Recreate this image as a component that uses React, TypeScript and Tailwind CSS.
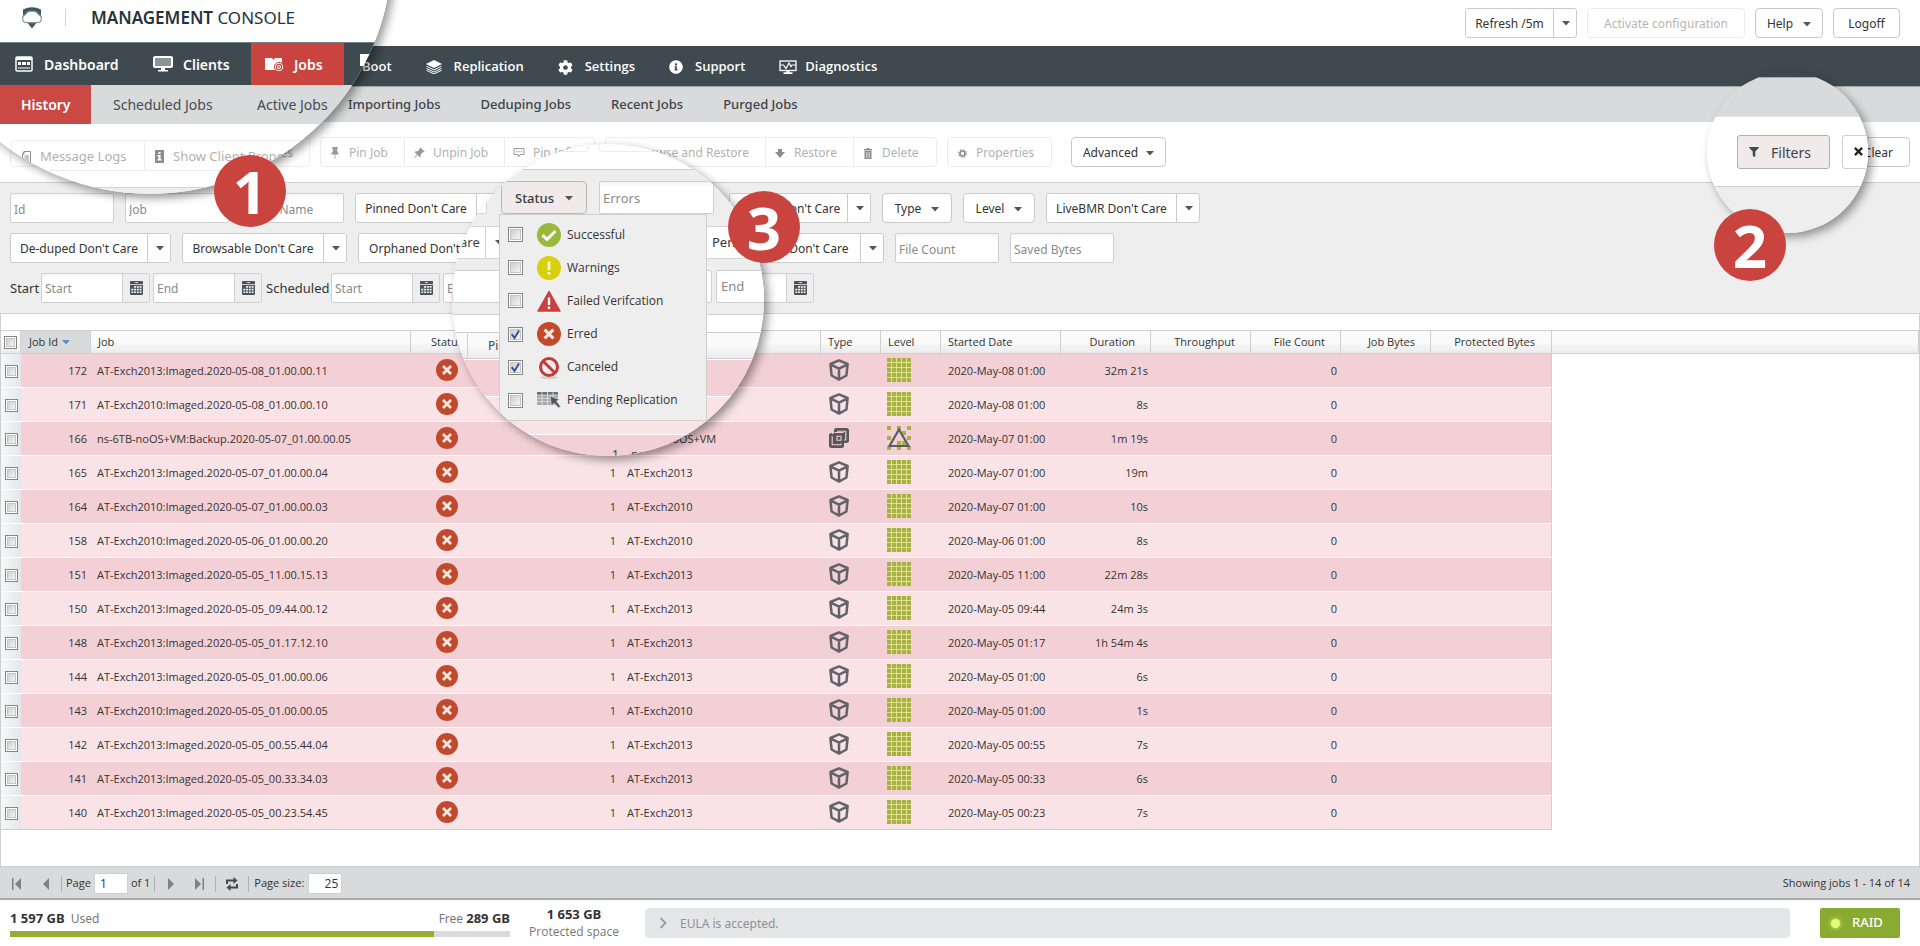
import React from "react";
import type { ReactNode } from "react";
import { FaCog, FaFilter, FaInfoCircle } from "react-icons/fa";
import { BsPinAngleFill, BsPinFill } from "react-icons/bs";

type IconProps = { className?: string };

const Caret = ({ className = "text-[#555]" }: IconProps) => (
  <svg className={`shrink-0 ${className}`} width="8" height="5" viewBox="0 0 8 5" aria-hidden="true">
    <path d="M0 0h8L4 4.6z" fill="currentColor" />
  </svg>
);

const Logo = () => (
  <svg width="22" height="22" viewBox="0 0 22 22" aria-hidden="true">
    <path d="M2 2.6Q11 -2 20 2.6V9H2z" fill="#3f5963" />
    <path d="M5.400 14.400 11 21.400l5.600-7z" fill="#3f5963" />
    <path
      d="M6 5.200Q11 3 16 5.200q.5 1.400 1.700 2.300 2.700 1.200 2.700 4.200 0 3.900-4.600 3.900H6.200q-4.600 0-4.600-3.900 0-3 2.700-4.200Q5.500 6.600 6 5.200z"
      fill="#fff"
      stroke="#7d8d94"
      strokeWidth="1.100"
    />
  </svg>
);

const DashboardIcon = () => (
  <svg width="18" height="16" viewBox="0 0 18 16" aria-hidden="true">
    <rect x="1" y="1" width="16" height="14" rx="1" fill="none" stroke="#fff" strokeWidth="1.500" />
    <path d="M1 1h16v3H1zM3 6h3v3H3zM7 6h4v3H7zM12 6h3v3h-3z" fill="#fff" />
    <path d="M3 12h12" stroke="#fff" strokeWidth="1" />
  </svg>
);

const ScreenIcon = () => (
  <svg width="20" height="16" viewBox="0 0 20 16" aria-hidden="true">
    <rect x="1" y="1" width="18" height="10" rx="1" fill="#8b9499" stroke="#fff" strokeWidth="2" />
    <path d="M8 11h4v3H8zM5 14h10v1.500H5z" fill="#fff" />
  </svg>
);

const JobsIcon = () => (
  <svg width="19" height="15" viewBox="0 0 19 15" aria-hidden="true">
    <path d="M0 1h7l1.500 2L10 1h7v12H0z" fill="#fff" />
    <circle cx="14" cy="10" r="4.600" fill="#fff" stroke="#c9433f" strokeWidth="1" />
    <circle cx="14" cy="10" r="2.600" fill="none" stroke="#c9433f" strokeWidth="1.200" />
    <circle cx="14" cy="10" r="0.900" fill="#c9433f" />
  </svg>
);

const LayersIcon = () => (
  <svg width="16" height="14" viewBox="0 0 16 14" aria-hidden="true">
    <path d="M8 0 16 4 8 8 0 4z" fill="#fff" />
    <path d="m.5 6.200 7.500 3.700 7.500-3.700M.5 8.400 8 12.100l7.500-3.700M.5 10.300 8 14l7.500-3.700" fill="none" stroke="#fff" strokeWidth="1" />
  </svg>
);

const DiagnosticsIcon = () => (
  <svg width="18" height="14" viewBox="0 0 18 14" aria-hidden="true">
    <rect x="1" y="1" width="16" height="9.500" fill="none" stroke="#fff" strokeWidth="1.300" />
    <path d="M1 5h3.500l2.500 3.500L10 3l2 3.500L13 5h4" fill="none" stroke="#fff" strokeWidth="1.200" />
    <path d="M7.500 10.500h3v2h-3zM4.500 12.300h9V14h-9z" fill="#fff" />
  </svg>
);

const LogsIcon = () => (
  <svg width="10" height="12" viewBox="0 0 10 12" aria-hidden="true">
    <path d="M3 .5h6.500v11H1.500V3zM3 .5V3H1.500M3.500 5h4.500M3.500 7h4.500M3.500 9h4.500" fill="none" stroke="#8d8d8d" />
  </svg>
);

const InfoBoxIcon = () => (
  <svg width="9" height="13" viewBox="0 0 9 13" aria-hidden="true">
    <rect width="9" height="13" fill="#8d8d8d" />
    <path d="M3.500 2h2v2h-2zM2.500 5h3v4h1v1.500h-4V9h1V6.500h-1z" fill="#fff" />
  </svg>
);

const BubbleIcon = () => (
  <svg width="12" height="10" viewBox="0 0 12 10" aria-hidden="true">
    <path d="M1 .5h10v6H7L5.500 9 5 6.500H1z" fill="none" stroke="#999" />
    <path d="M3 3h1.200v1.200H3zM5.400 3h1.200v1.200H5.400zM7.800 3H9v1.200H7.800z" fill="#999" />
  </svg>
);

const RestoreIcon = () => (
  <svg width="10" height="9" viewBox="0 0 10 9" aria-hidden="true">
    <path d="M3 0h4v3h3L5 9 0 3h3z" fill="#8d8d8d" />
  </svg>
);

const TrashIcon = () => (
  <svg width="8" height="11" viewBox="0 0 8 11" aria-hidden="true">
    <path d="M0 1h8v1.400H0zM2.700 0h2.600v1H2.700zM.5 3h7v8h-7z" fill="#8d8d8d" />
    <path d="M2.500 4v6M4 4v6M5.500 4v6" stroke="#fff" strokeWidth=".5" />
  </svg>
);

const GearRing = () => (
  <svg width="9" height="9" viewBox="0 0 9 9" aria-hidden="true">
    <circle cx="4.500" cy="4.500" r="2.500" fill="none" stroke="#8d8d8d" strokeWidth="1.600" />
    <circle cx="4.500" cy="4.500" r="3.800" fill="none" stroke="#8d8d8d" strokeWidth="1.200" strokeDasharray="1.500 1.480" />
  </svg>
);

const CalendarIcon = () => (
  <svg width="13" height="14" viewBox="0 0 13 14" aria-hidden="true">
    <rect width="13" height="14" rx="1" fill="#4b5459" />
    <path d="M0 3.500h13" stroke="#eee" strokeWidth=".8" />
    <path d="M5 1.500h3" stroke="#eee" strokeWidth=".8" />
    <path
      d="M4 5h2v1.700H4zM6.800 5h2v1.700h-2zM9.600 5h2v1.700h-2zM1.300 7.700h2v1.700h-2zM4 7.700h2v1.700H4zM6.800 7.700h2v1.700h-2zM9.600 7.700h2v1.700h-2zM1.300 10.400h2v1.700h-2zM4 10.400h2v1.700H4zM6.800 10.400h2v1.700h-2zM9.600 10.400h2v1.700h-2z"
      fill="#eee"
    />
  </svg>
);

const ErrorIcon = ({ size = 22 }: { size?: number }) => (
  <svg width={size} height={size} viewBox="0 0 22 22" role="img" aria-label="Erred">
    <circle cx="11" cy="11" r="11" fill="#c04a2b" />
    <path d="m7 7 8 8m0-8-8 8" stroke="#f9e6e2" strokeWidth="2.800" />
  </svg>
);

const CubeIcon = () => (
  <svg width="20" height="22" viewBox="0 0 20 22" role="img" aria-label="Imaged">
    <path
      d="M10 1.400 18.600 5l-1.200 11.500L10 20.600l-7.400-4.100L1.400 5zM1.400 5.400 10 9.600l8.600-4.200M10 9.600v11"
      fill="none"
      stroke="#62646a"
      strokeWidth="2.500"
      strokeLinejoin="round"
    />
  </svg>
);

const BackupIcon = () => (
  <svg width="20" height="20" viewBox="0 0 20 20" role="img" aria-label="Backup">
    <rect x="5" y="0" width="15" height="15" rx="2.500" fill="#55575c" />
    <rect x="0" y="5" width="15" height="15" rx="2.500" fill="#55575c" />
    <path d="M8 3.200h8.800v8.800h-1.600M3.200 8.200V16.800H12v-1.400M5.500 4.500H14.500M4.500 5.500H3" fill="none" stroke="#f3d0d5" strokeWidth="1.100" />
    <path d="M8 8.200h4v4H8z" fill="none" stroke="#f3d0d5" strokeWidth="1.100" />
  </svg>
);

const five = [0, 1, 2, 3, 4];

const FullIcon = () => (
  <svg width="24" height="24" viewBox="0 0 24 24" role="img" aria-label="Full">
    <rect width="24" height="24" fill="#dde58c" />
    {five.map((r) => five.map((c) => <rect key={`${r}${c}`} x={c * 5} y={r * 5} width="4" height="4" fill="#a9b045" />))}
  </svg>
);

const IncrementalIcon = () => (
  <svg width="24" height="24" viewBox="0 0 24 24" role="img" aria-label="Incremental">
    <path
      d="M0 0h4v4H0zM10 0h4v4h-4zM20 0h4v4h-4zM0 10h4v4H0zM20 10h4v4h-4zM15 5h4v4h-4zM10 15h4v4h-4zM15 15h4v4h-4zM0 20h4v4H0zM10 20h4v4h-4zM20 20h4v4h-4z"
      fill="#a9b045"
    />
    <path d="M12 3.500 21.500 20h-19z" fill="none" stroke="#5b5d61" strokeWidth="2.200" />
  </svg>
);

const CheckBox = ({ label, checked = false, big = false }: { label: string; checked?: boolean; big?: boolean }) => (
  <span className="relative inline-flex align-middle">
    <input
      type="checkbox"
      aria-label={label}
      defaultChecked={checked}
      className={`peer appearance-none border border-[#858585] bg-gradient-to-br from-[#c3c5c8] to-white shadow-[inset_0_0_0_1px_#fff,inset_0_0_0_2px_#c4c4c4] ${big ? "size-[15px]" : "size-[13px]"}`}
    />
    <svg className="pointer-events-none absolute inset-0 hidden size-full peer-checked:block" viewBox="0 0 15 15" aria-hidden="true">
      <path d="M3.800 7.200 6.500 11 11 3.500" fill="none" stroke="#37529b" strokeWidth="2" />
    </svg>
  </span>
);

const Button = ({ children, className = "" }: { children: ReactNode; className?: string }) => (
  <button type="button" className={`flex h-[30px] items-center justify-center rounded-[4px] border border-[#c9c9c9] bg-white pt-[2px] text-[#333] ${className}`}>
    {children}
  </button>
);

const Split = ({ label, width }: { label: string; width: string }) => (
  <div className={`flex h-[30px] shrink-0 overflow-hidden rounded-[3px] border border-[#cbcbcb] bg-white ${width}`}>
    <button type="button" className="min-w-0 flex-1 whitespace-nowrap pt-[2px] text-center text-[#333]">{label}</button>
    <button type="button" aria-label={`${label} options`} className="flex w-[23px] items-center justify-center border-l border-[#cbcbcb] pl-[2px]">
      <Caret />
    </button>
  </div>
);

const inputLook = "min-w-0 border border-[#cfcfcf] bg-white bg-gradient-to-b from-[#f4f5f5] to-white to-20% px-[3px] pt-[2px] text-[#444] placeholder:text-[#8a8a8a] outline-none";

const Field = ({ label, className = "w-[104px]" }: { label: string; className?: string }) => (
  <input aria-label={label} placeholder={label} className={`h-[30px] shrink-0 rounded-[2px] ${inputLook} ${className}`} />
);

const DateField = ({ label, name }: { label: string; name: string }) => (
  <div className="flex h-[30px] w-[109px] shrink-0">
    <input aria-label={name} placeholder={label} className={`w-[82px] rounded-l-[2px] ${inputLook}`} />
    <button type="button" aria-label={`Pick ${name}`} className="flex w-[27px] items-center justify-center rounded-r-[2px] border border-l-0 border-[#cfcfcf]">
      <CalendarIcon />
    </button>
  </div>
);

const NavLink = ({ icon, children, className = "" }: { icon?: ReactNode; children: ReactNode; className?: string }) => (
  <a href="#" className={`flex h-full items-center font-semibold text-white ${className}`}>
    {icon}
    {children}
  </a>
);

const Tool = ({ icon, children, className = "" }: { icon?: ReactNode; children: ReactNode; className?: string }) => (
  <button type="button" disabled className={`flex h-full items-center whitespace-nowrap pt-[2px] text-[#b1b1b1] ${className}`}>
    <span className="mr-2 flex w-[12px] justify-center">{icon}</span>
    {children}
  </button>
);

const toolGroup = "flex h-[30px] shrink-0 divide-x divide-[#ececec] overflow-hidden rounded-[4px] border border-[#ececec]";

const jobs: [number, string, string, string, string][] = [
  [172, "AT-Exch2013:Imaged.2020-05-08_01.00.00.11", "AT-Exch2013", "2020-May-08 01:00", "32m 21s"],
  [171, "AT-Exch2010:Imaged.2020-05-08_01.00.00.10", "AT-Exch2010", "2020-May-08 01:00", "8s"],
  [166, "ns-6TB-noOS+VM:Backup.2020-05-07_01.00.00.05", "ns-6TB-noOS+VM", "2020-May-07 01:00", "1m 19s"],
  [165, "AT-Exch2013:Imaged.2020-05-07_01.00.00.04", "AT-Exch2013", "2020-May-07 01:00", "19m"],
  [164, "AT-Exch2010:Imaged.2020-05-07_01.00.00.03", "AT-Exch2010", "2020-May-07 01:00", "10s"],
  [158, "AT-Exch2010:Imaged.2020-05-06_01.00.00.20", "AT-Exch2010", "2020-May-06 01:00", "8s"],
  [151, "AT-Exch2013:Imaged.2020-05-05_11.00.15.13", "AT-Exch2013", "2020-May-05 11:00", "22m 28s"],
  [150, "AT-Exch2013:Imaged.2020-05-05_09.44.00.12", "AT-Exch2013", "2020-May-05 09:44", "24m 3s"],
  [148, "AT-Exch2013:Imaged.2020-05-05_01.17.12.10", "AT-Exch2013", "2020-May-05 01:17", "1h 54m 4s"],
  [144, "AT-Exch2013:Imaged.2020-05-05_01.00.00.06", "AT-Exch2013", "2020-May-05 01:00", "6s"],
  [143, "AT-Exch2010:Imaged.2020-05-05_01.00.00.05", "AT-Exch2010", "2020-May-05 01:00", "1s"],
  [142, "AT-Exch2013:Imaged.2020-05-05_00.55.44.04", "AT-Exch2013", "2020-May-05 00:55", "7s"],
  [141, "AT-Exch2013:Imaged.2020-05-05_00.33.34.03", "AT-Exch2013", "2020-May-05 00:33", "6s"],
  [140, "AT-Exch2013:Imaged.2020-05-05_00.23.54.45", "AT-Exch2013", "2020-May-05 00:23", "7s"],
];

const thBase = "h-[24px] border-r border-y border-[#cfcfcf] p-0 px-[7px] font-normal text-[#333]";
const th = `${thBase} bg-gradient-to-b from-[#fafafa] from-50% to-[#e9ebed]`;

const JobTable = () => (
  <table className="w-full table-fixed border-separate border-spacing-0 text-left text-[11px] text-[#333]">
    <colgroup>
      <col className="w-[20px]" />
      <col className="w-[70px]" />
      <col className="w-[320px]" />
      <col className="w-[60px]" />
      <col className="w-[60px]" />
      <col className="w-[90px]" />
      <col className="w-[200px]" />
      <col className="w-[60px]" />
      <col className="w-[60px]" />
      <col className="w-[120px]" />
      <col className="w-[90px]" />
      <col className="w-[100px]" />
      <col className="w-[90px]" />
      <col className="w-[90px]" />
      <col className="w-[121px]" />
      <col />
    </colgroup>
    <thead>
      <tr>
        <th className={`${th} !px-0 text-center leading-none`}><CheckBox label="Select all jobs" /></th>
        <th className={`${thBase} bg-[#d9dadc]`}>
          <span className="flex items-center gap-1 pl-px">Job Id <Caret className="text-[#5f8cc4]" /></span>
        </th>
        <th className={th}>Job</th>
        <th className={`${th} text-right`}>Status</th>
        <th className={th} />
        <th className={th} />
        <th className={th} />
        <th className={th}>Type</th>
        <th className={th}>Level</th>
        <th className={th}>Started Date</th>
        <th className={`${th} !pr-[15px] text-right`}>Duration</th>
        <th className={`${th} !pr-[15px] text-right`}>Throughput</th>
        <th className={`${th} !pr-[15px] text-right`}>File Count</th>
        <th className={`${th} !pr-[15px] text-right`}>Job Bytes</th>
        <th className={`${th} !pr-4 text-right`}>Protected Bytes</th>
        <th className={th} />
      </tr>
    </thead>
    <tbody>
      {jobs.map(([id, job, client, started, duration], i) => (
        <tr key={id} className={`*:h-[34px] *:border-b *:p-0 *:pt-[2px] ${i % 2 ? "bg-[#f9e3e6]" : "bg-[#f3d0d5]"} ${i === jobs.length - 1 ? "*:border-[#cfcfcf]" : "*:border-white"}`}>
          <td className="bg-gradient-to-r from-[#f7f7f7] to-[#e4e6e9] text-center leading-none"><CheckBox label={`Select job ${id}`} /></td>
          <td className="!pr-1 text-right">{id}</td>
          <td className="!pl-[6px]">{job}</td>
          <td className="!pb-[2px] !pl-[25px] !pt-0"><ErrorIcon /></td>
          <td />
          <td className="!pr-[5px] text-right">1</td>
          <td className="!pl-[6px]">{client}</td>
          <td className="!pb-[2px] !pl-2 !pt-0">{id === 166 ? <BackupIcon /> : <CubeIcon />}</td>
          <td className="!pb-[2px] !pl-[6px] !pt-0">{id === 166 ? <IncrementalIcon /> : <FullIcon />}</td>
          <td className="!pl-[7px]">{started}</td>
          <td className="!pr-[3px] text-right">{duration}</td>
          <td />
          <td className="!pr-1 text-right">0</td>
          <td />
          <td className="border-r !border-r-[#cfcfcf]" />
          <td className="!border-white bg-white" />
        </tr>
      ))}
    </tbody>
  </table>
);

const lens = "absolute overflow-hidden rounded-full shadow-[4px_4px_10px_rgba(0,0,0,0.4)]";

const NavLens = () => (
  <div className={`${lens} -left-[92px] -top-[290px] size-[484px] bg-white pl-[92px] pt-[290px] text-[14px]`}>
    <div className="flex h-[42px] w-[392px] items-center bg-white pb-[7px] pl-[21px]">
      <Logo />
      <span className="ml-[22px] h-[17px] w-px bg-[#d5d5d5]" />
      <h1 className="ml-[25px] text-[17px] text-[#263238]"><span className="font-semibold">MANAGEMENT</span> CONSOLE</h1>
    </div>
    <nav className="flex h-[43px] w-[392px] items-center border-t border-[#6f8287] bg-[#3e4a4f]">
      <NavLink icon={<DashboardIcon />} className="w-[153px] gap-[11px] pl-[15px]">Dashboard</NavLink>
      <NavLink icon={<ScreenIcon />} className="w-[98px] gap-[10px]">Clients</NavLink>
      <NavLink icon={<JobsIcon />} className="w-[93px] gap-[10px] bg-[#c9433f] pl-[14px]">Jobs</NavLink>
      <span className="mb-2 ml-4 h-3 w-4 bg-white" />
    </nav>
    <nav className="flex h-[39px] w-[392px] items-center bg-[#d9dadc] text-[#454d51]">
      <a href="#" className="flex h-full w-[91px] items-center bg-[#ca4945] pl-[21px] font-semibold text-white">History</a>
      <a href="#" className="ml-[22px] w-[144px]">Scheduled Jobs</a>
      <a href="#">Active Jobs</a>
    </nav>
    <div className="flex h-[64px] w-[392px] border-b border-[#d3d3d3] pl-[11px] pt-4 text-[13px]">
      <div className="flex h-[31px] divide-x divide-[#ececec] rounded-[3px] border border-[#ececec]">
        <Tool icon={<LogsIcon />} className="w-[133px] pl-2">Message Logs</Tool>
        <Tool icon={<InfoBoxIcon />} className="w-[180px] pl-2">Show Client Properties</Tool>
      </div>
    </div>
    <div className="h-3 bg-[#eee]" />
  </div>
);

const FilterLens = () => (
  <div className={`${lens} right-[52px] top-[72px] size-[161px]`}>
    <div className="h-[5px] bg-[#3e4a4f]" />
    <div className="h-[40px] border-b border-t border-b-[#e3e3e3] border-t-[#aaa] bg-[#d9dadc]" />
    <div className="flex h-[70px] items-center gap-3 border-b border-[#cfcfcf] bg-white pl-[30px]">
      <button type="button" className="flex h-[34px] w-[93px] shrink-0 items-center gap-3 rounded-[3px] border border-[#b5b0b1] bg-[#f0eaeb] pl-[11px] pt-px text-[14px] text-[#444]">
        <FaFilter className="size-[10px] text-[#3e4a4f]" aria-hidden="true" />
        Filters
      </button>
      <button type="button" aria-label="Clear filters" className="flex h-[34px] w-[60px] shrink-0 items-center rounded-[3px] border border-[#d0d0d0] bg-white pl-[11px]">
        <svg width="9" height="9" viewBox="0 0 8 8" aria-hidden="true"><path d="m.8.8 6.400 6.400m0-6.400L.8 7.200" stroke="#222" strokeWidth="2" /></svg>
      </button>
    </div>
    <div className="h-[50px] bg-[#eee]" />
  </div>
);

const statuses: { label: string; checked?: boolean; icon: ReactNode }[] = [
  {
    label: "Successful",
    icon: <svg width="24" height="24" viewBox="0 0 24 24" aria-hidden="true"><circle cx="12" cy="12" r="12" fill="#9bb83c" /><path d="m5.500 12.200 4.500 4.300 8.500-8.500" fill="none" stroke="#fff" strokeWidth="3" /></svg>,
  },
  {
    label: "Warnings",
    icon: <svg width="24" height="24" viewBox="0 0 24 24" aria-hidden="true"><circle cx="12" cy="12" r="12" fill="#d9cf0b" /><path d="M12 5.500v8.500M12 16v2.600" stroke="#fdfbe0" strokeWidth="2.600" /></svg>,
  },
  {
    label: "Failed Verifcation",
    icon: <svg width="24" height="22" viewBox="0 0 24 22" aria-hidden="true"><path d="M12 1.500 23 21H1z" fill="#c9403d" stroke="#c9403d" strokeWidth="1.500" strokeLinejoin="round" /><path d="M12 7.500V15M12 16.500V19" stroke="#fff" strokeWidth="2.400" /></svg>,
  },
  { label: "Erred", checked: true, icon: <ErrorIcon size={24} /> },
  {
    label: "Canceled",
    checked: true,
    icon: <svg width="22" height="23" viewBox="0 0 22 23" aria-hidden="true"><ellipse cx="11" cy="21.500" rx="9" ry="1.300" fill="#ccc" /><circle cx="11" cy="11" r="8.500" fill="#eee" stroke="#c23b3b" strokeWidth="3" /><path d="m5.200 5.200 11.600 11.600" stroke="#c23b3b" strokeWidth="3" /></svg>,
  },
  {
    label: "Pending Replication",
    icon: <svg width="24" height="18" viewBox="0 0 24 18" aria-hidden="true"><rect y="1" width="21" height="13" fill="#a5a7a9" /><path d="M0 4h21M0 7.300h21M0 10.700h21M5 1v13M10.500 1v13M16 1v13" stroke="#eee" strokeWidth=".7" /><path d="M0 1h4.500v2.500H0zM5.500 1H10v2.500H5.500zM11 1h4.500v2.500H11zM16.500 1H21v2.500h-4.500z" fill="#6c7073" /><path d="m13 5 9.500 3.500-3.200 1.700 4.200 5-2 1.800-4.300-4.900L14.500 15z" fill="#4d575c" stroke="#eee" strokeWidth=".6" /></svg>,
  },
];

const StatusLens = () => (
  <div className={`${lens} left-[452px] top-[144px] size-[312px] bg-white text-[13px]`}>
    <div className="flex h-[26px] gap-[10px] border-b border-[#cfcfcf]">
      <span className="h-[8px] w-[141px] rounded-b-[4px] border border-t-0 border-[#ececec]" />
      <span className="h-[8px] w-[170px] rounded-b-[4px] border border-t-0 border-[#ececec]" />
    </div>
    <div className="h-[145px] overflow-hidden border-b border-[#cfcfcf] bg-[#eee] pt-[11px]">
      <div className="flex h-[33px]">
        <span className="mr-[14px] w-[35px] rounded-[3px] border border-[#d5d5d5] bg-white" />
        <button type="button" className="flex w-[86px] items-center justify-center gap-[11px] rounded-[4px] border border-[#bdb6b7] bg-[#f0eaeb] pt-[2px] font-medium text-[#3c3c3c]">
          Status <Caret />
        </button>
        <input aria-label="Errors" placeholder="Errors" className={`ml-3 w-[115px] rounded-[2px] ${inputLook}`} />
      </div>
      <div className="mt-3 flex h-[33px] justify-between">
        <div className="flex w-[70px] items-center border-y border-[#d5d5d5] bg-white pl-2 text-[#444]">
          <span className="flex h-full w-[26px] items-center border-r border-[#d0d0d0] pt-px">are</span>
          <Caret className="ml-[9px] text-[#555]" />
        </div>
        <span className="flex w-[58px] items-center border-y border-[#d5d5d5] bg-white pl-[6px] pt-px text-[#333]">Pending</span>
      </div>
      <div className="mt-[11px] flex h-[33px] gap-1">
        <span className="w-[260px] shrink-0 rounded-[2px] border border-[#cfcfcf] bg-white" />
        <span className="flex w-[60px] shrink-0 items-center rounded-[2px] border border-[#cfcfcf] bg-white pl-1 text-[#888]">End</span>
      </div>
    </div>
    <div className="h-[17px] bg-white" />
    <div className="flex h-[27px] items-center border-y border-[#cfcfcf] bg-gradient-to-b from-[#fafafa] from-50% to-[#e9ebed] pt-px text-[12px] text-[#444]">
      <span className="mr-5 h-full w-4 border-r border-[#cfcfcf]" />
      Pinned
    </div>
    <div className="mt-px h-[37px] border-b border-white bg-[#f3d0d5]" />
    <div className="h-[38px] border-b border-white bg-[#f9e3e6]" />
    <div className="flex h-[38px] items-center gap-3 bg-[#f3d0d5] pl-[160px] pt-[2px] text-[12px] text-[#444]">
      <span>1</span>
      <span>ns-6TB-noOS+VM</span>
    </div>
    <div className="absolute left-[47px] top-[70px] grid h-[207px] w-[208px] grid-rows-6 border border-[#cfcfcf] bg-[#eee] py-[3px] font-['Open_Sans',sans-serif] text-[12px] text-[#333]">
      {statuses.map((s) => (
        <label key={s.label} className="flex items-center pl-2">
          <CheckBox label={s.label} checked={s.checked} big />
          <span className="ml-[13px] mr-[5px] flex w-[26px] justify-center">{s.icon}</span>
          <span>{s.label}</span>
        </label>
      ))}
    </div>
  </div>
);

const Badge = ({ n, className }: { n: number; className: string }) => (
  <span className={`absolute flex size-[72px] items-center justify-center rounded-full bg-[#c9433f] text-[60px] font-bold leading-none text-white ${className}`}>{n}</span>
);

const PagerArrow = ({ label, d, className = "" }: { label: string; d: string; className?: string }) => (
  <button type="button" aria-label={label} className={`flex size-[13px] items-center justify-center text-[#7c8387] ${className}`}>
    <svg width="12" height="12" viewBox="0 0 12 12" aria-hidden="true"><path d={d} fill="currentColor" /></svg>
  </button>
);

const Rule = ({ className = "" }: IconProps) => <span className={`h-[16px] w-px bg-[#aeb1b3] ${className}`} />;

export default function App() {
  return (
    <div className="relative flex min-h-screen flex-col overflow-hidden bg-white font-['Noto_Sans','Open_Sans',sans-serif] text-[12px] text-[#333]">
      <header className="flex h-[46px] items-start justify-end gap-[10px] pr-5 pt-2">
        <Split label="Refresh /5m" width="w-[112px]" />
        <button type="button" disabled className="h-[30px] w-[158px] rounded-[4px] border border-[#ececec] pt-[2px] text-[#b5b5b5]">Activate configuration</button>
        <Button className="w-[68px] gap-[10px]">Help <Caret /></Button>
        <Button className="w-[67px]">Logoff</Button>
      </header>

      <nav className="flex h-[40px] items-center gap-[34px] bg-[#3e4a4f] pl-[362px] pt-[2px] font-['Open_Sans',sans-serif] text-[13px]">
        <NavLink>Boot</NavLink>
        <NavLink icon={<LayersIcon />} className="gap-3">Replication</NavLink>
        <NavLink icon={<FaCog className="size-[15px]" aria-hidden="true" />} className="gap-3">Settings</NavLink>
        <NavLink icon={<FaInfoCircle className="size-[14px]" aria-hidden="true" />} className="gap-3">Support</NavLink>
        <NavLink icon={<DiagnosticsIcon />} className="gap-2">Diagnostics</NavLink>
      </nav>

      <nav className="flex h-[36px] items-center gap-10 border-t border-[#a5a8aa] bg-[#d9dadc] pl-[348px] text-[13px] font-medium text-[#3c4448]">
        <a href="#">Importing Jobs</a>
        <a href="#">Deduping Jobs</a>
        <a href="#">Recent Jobs</a>
        <a href="#">Purged Jobs</a>
      </nav>

      <div className="flex h-[60px] items-center gap-[10px] pl-[10px] pr-[10px]">
        <div className={`${toolGroup} w-[300px]`}>
          <Tool icon={<LogsIcon />} className="w-[130px] pl-[10px]">{null}</Tool>
          <Tool className="flex-1 justify-end pr-4">Show Client Properties</Tool>
        </div>
        <div className={toolGroup}>
          <Tool icon={<BsPinFill className="size-[12px] text-[#999]" aria-hidden="true" />} className="w-[84px] pl-2">
            Pin Job
          </Tool>
          <Tool icon={<BsPinAngleFill className="size-[12px] text-[#999]" aria-hidden="true" />} className="w-[100px] pl-2">
            Unpin Job
          </Tool>
          <Tool icon={<BubbleIcon />} className="w-[89px] pl-2">Pin Info</Tool>
        </div>
        <div className={toolGroup}>
          <Tool className="w-[160px] justify-end pr-4">Browse and Restore</Tool>
          <Tool icon={<RestoreIcon />} className="w-[88px] pl-2">Restore</Tool>
          <Tool icon={<TrashIcon />} className="w-[82px] pl-2">Delete</Tool>
        </div>
        <div className={toolGroup}>
          <Tool icon={<GearRing />} className="w-[103px] pl-2">Properties</Tool>
        </div>
        <Button className="ml-[9px] w-[95px] gap-2">Advanced <Caret /></Button>
        <Button className="ml-auto w-[68px] justify-end pr-4">Clear</Button>
      </div>

      <section aria-label="Filters" className="flex h-[132px] flex-col gap-[10px] border-y border-[#cfcfcf] bg-[#eee] pl-[10px] pt-[10px]">
        <div className="flex gap-[11px]">
          <Field label="Id" />
          <Field label="Job" />
          <Field label="Client Name" />
          <Split label="Pinned Don't Care" width="w-[145px]" />
          <span className="w-[207px]" />
          <Split label="Purged Don't Care" width="w-[142px]" />
          <Button className="w-[70px] gap-[10px]">Type <Caret /></Button>
          <Button className="w-[72px] gap-[10px]">Level <Caret /></Button>
          <Split label="LiveBMR Don't Care" width="w-[154px]" />
        </div>
        <div className="flex gap-[11px]">
          <Split label="De-duped Don't Care" width="w-[161px]" />
          <Split label="Browsable Don't Care" width="w-[165px]" />
          <Split label="Orphaned Don't Care" width="w-[165px]" />
          <span className="w-[182px]" />
          <Split label="Pending Don't Care" width="w-[157px]" />
          <Field label="File Count" />
          <Field label="Saved Bytes" />
        </div>
        <div className="flex items-center gap-[3px]">
          <span className="w-[28px] pt-[2px] text-[13px]">Start</span>
          <DateField label="Start" name="Start from" />
          <DateField label="End" name="Start until" />
          <span className="w-[63px] pl-px pt-[2px] text-[13px]">Scheduled</span>
          <DateField label="Start" name="Scheduled from" />
          <DateField label="End" name="Scheduled until" />
          <span className="w-[147px]" />
          <DateField label="End" name="Completed until" />
        </div>
      </section>

      <main className="flex-1 border-x border-[#cfcfcf] pt-4 font-['Open_Sans',sans-serif]">
        <JobTable />
      </main>

      <div className="flex h-[34px] items-center border-b-2 border-t border-b-[#aaacad] border-t-[#cbcdce] bg-[#d9dadc] px-[10px] pt-[2px] font-['Open_Sans',sans-serif] text-[11px]">
        <PagerArrow label="First page" d="M1 0h1.500v12H1zM10 0v12L4 6z" />
        <PagerArrow label="Previous page" d="M9 0v12L3 6z" className="ml-4" />
        <Rule className="ml-[9px] mr-1" />
        <label className="flex items-center gap-[3px]">
          Page
          <input defaultValue="1" className="h-[21px] w-[34px] border border-[#d0d0d0] bg-white px-[5px] text-[12px]" />
        </label>
        <span className="ml-[3px] mr-1">of 1</span>
        <Rule />
        <PagerArrow label="Next page" d="M3 0v12l6-6z" className="ml-[9px]" />
        <PagerArrow label="Last page" d="M2 0v12l6-6zM9.500 0H11v12H9.500z" className="ml-[15px] mr-[10px]" />
        <Rule />
        <button type="button" aria-label="Reload" className="mx-[10px]">
          <svg width="12" height="14" viewBox="0 0 12 14" aria-hidden="true"><path d="M1 7V3.500h7M11 7v3.500H4" fill="none" stroke="#3e4a4f" strokeWidth="2" /><path d="m7.500 0 4 3.500-4 3.500zM4.500 7v7l-4-3.500z" fill="#3e4a4f" /></svg>
        </button>
        <Rule />
        <label className="ml-[5px] flex items-center gap-1">
          Page size:
          <input defaultValue="25" className="h-[21px] w-[34px] border border-[#d0d0d0] bg-white px-[3px] text-right text-[12px]" />
        </label>
        <span className="ml-auto">Showing jobs 1 - 14 of 14</span>
      </div>

      <footer className="flex h-[46px] items-center bg-white pl-[10px] pr-5">
        <div className="w-[500px] shrink-0">
          <div className="flex items-baseline justify-between text-[12px] text-[#777]">
            <span><b className="mr-[3px] text-[13px] text-[#333]">1 597 GB</b> Used</span>
            <span>Free <b className="text-[13px] text-[#333]">289 GB</b></span>
          </div>
          <div className="mt-[3px] flex h-[6px] bg-[#d9dcdf]"><div className="w-[84.7%] bg-[#96ad33]" /></div>
        </div>
        <div className="ml-[14px] w-[100px] shrink-0 text-center font-['Open_Sans',sans-serif] text-[12px] leading-[17px] text-[#777]">
          <b className="block text-[13px] text-[#333]">1 653 GB</b>
          <span className="whitespace-nowrap">Protected space</span>
        </div>
        <div className="ml-[21px] flex h-[30px] flex-1 items-center gap-[13px] rounded-[4px] bg-[#e5e6e8] pl-[14px] text-[#8d9093]">
          <svg width="8" height="12" viewBox="0 0 8 12" aria-hidden="true"><path d="m1.500 1 5 5-5 5" fill="none" stroke="#9a9d9f" strokeWidth="1.800" /></svg>
          <span className="pt-px">EULA is accepted.</span>
        </div>
        <button type="button" className="ml-[30px] flex h-[30px] w-[80px] items-center gap-3 rounded-[2px] bg-[#8aab32] pl-[11px] text-[13px] font-medium text-white">
          <span className="size-[9px] rounded-full bg-[#e3ff7c] shadow-[0_0_4px_#e3ff7c]" />
          RAID
        </button>
      </footer>

      <NavLens />
      <FilterLens />
      <StatusLens />
      <Badge n={1} className="left-[214px] top-[155px]" />
      <Badge n={2} className="right-[134px] top-[209px]" />
      <Badge n={3} className="left-[728px] top-[191px]" />
    </div>
  );
}
